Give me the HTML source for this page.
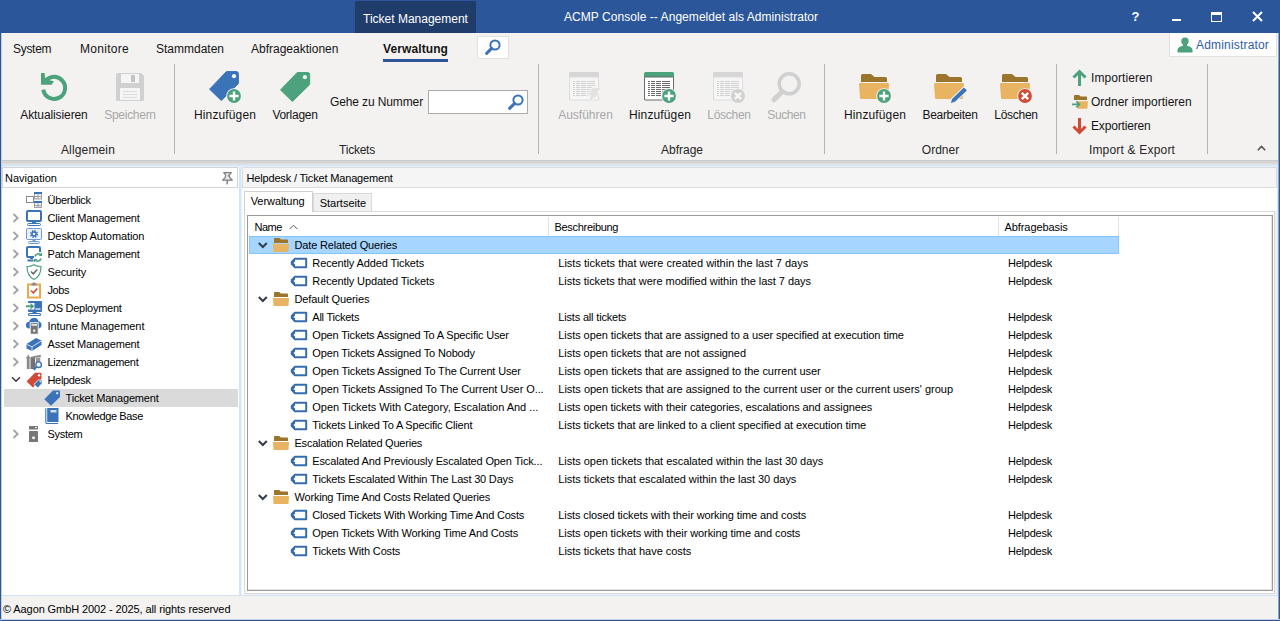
<!DOCTYPE html>
<html lang="de"><head><meta charset="utf-8"><title>ACMP Console</title><style>
*{box-sizing:border-box;margin:0;padding:0}
html,body{width:1280px;height:621px;overflow:hidden;background:#fff}
body{position:relative;font-family:"Liberation Sans",sans-serif;color:#000}
.a{position:absolute}
.t12{position:absolute;font-size:12px;line-height:14px;height:14px;white-space:nowrap;color:#151515}
.t11{position:absolute;font-size:11px;line-height:13px;height:13px;white-space:nowrap;color:#000}
.c{text-align:center}
.dis{color:#a8a8a8}
.sep{position:absolute;top:64px;width:1px;height:90px;background:#b4b4b4}
svg{position:absolute;overflow:visible}
</style></head>
<body>
<div class="a" style="left:0;top:0;width:1280px;height:33px;background:#2b579a"></div>
<div class="a" style="left:355px;top:1px;width:121px;height:32px;background:#1f3c6b"></div>
<div class="t12" style="left:363px;top:12px;color:#fff">Ticket Management</div>
<div class="t12" style="left:564px;top:10px;color:#fff;letter-spacing:.05px">ACMP Console -- Angemeldet als Administrator</div>
<div class="a" style="left:1131px;top:9px;width:9px;font-size:13px;line-height:16px;font-weight:bold;color:#fff;text-align:center">?</div>
<div class="a" style="left:1172px;top:19px;width:9px;height:2px;background:#fff"></div>
<div class="a" style="left:1211px;top:12px;width:11px;height:10px;border:1px solid #fff;border-top-width:3px"></div>
<svg style="left:1252px;top:11px" width="11" height="11" viewBox="0 0 11 11"><path d="M1 1L10 10M10 1L1 10" stroke="#fff" stroke-width="2" fill="none"/></svg>
<div class="a" style="left:0;top:33px;width:1280px;height:127px;background:#f3f2f1"></div>
<div class="a" style="left:0;top:160px;width:1280px;height:5px;background:linear-gradient(#c9c9c9,#e4e4e4)"></div>
<div class="a" style="left:0;top:165px;width:1280px;height:2px;background:linear-gradient(#cfe6fc,#e6f1fc)"></div>
<div class="t12" style="left:13px;top:42px;letter-spacing:-0.3px">System</div>
<div class="t12" style="left:80px;top:42px;letter-spacing:0.3px">Monitore</div>
<div class="t12" style="left:156px;top:42px">Stammdaten</div>
<div class="t12" style="left:251px;top:42px">Abfrageaktionen</div>
<div class="t12" style="left:383px;top:42px;font-weight:bold;letter-spacing:0.1px">Verwaltung</div>
<div class="a" style="left:383px;top:59px;width:65px;height:3px;background:#2b579a"></div>
<div class="a" style="left:477px;top:36px;width:32px;height:23px;background:#fff;border:1px solid #e3e1df"></div>
<svg style="left:485px;top:38.7px" width="16" height="16" viewBox="0 0 16 16"><circle cx="10" cy="6" r="4.6" fill="none" stroke="#3b73b9" stroke-width="2"/><path d="M6.6 9.4L1.6 14.4" stroke="#3b73b9" stroke-width="2.9" stroke-linecap="round"/></svg>
<div class="a" style="left:1169px;top:33px;width:108px;height:24px;background:#fff;border:1px solid #e3e1df;border-top:none"></div>
<svg style="left:1177px;top:37px" width="16" height="16" viewBox="0 0 16 16"><circle cx="8" cy="4.2" r="3.7" fill="#4ca27c"/><rect x="6" y="6" width="4" height="4" fill="#4ca27c"/><path d="M0.5 15.5V13c0-2.2 2.6-3.6 5-4.3h5c2.4 .7 5 2.100 5 4.300v2.500z" fill="#4ca27c"/></svg>
<div class="t12" style="left:1196px;top:38px;color:#2f5ca6;letter-spacing:.18px">Administrator</div>
<div class="sep" style="left:174px"></div>
<div class="sep" style="left:538px"></div>
<div class="sep" style="left:824px"></div>
<div class="sep" style="left:1056px"></div>
<div class="sep" style="left:1207px"></div>
<div class="t12 c" style="left:-6px;width:120px;top:108px;letter-spacing:-0.1px">Aktualisieren</div>
<div class="t12 c dis" style="left:70px;width:120px;top:108px;letter-spacing:-0.28px">Speichern</div>
<div class="t12 c" style="left:28px;width:120px;top:143px;color:#262626;letter-spacing:0.15px">Allgemein</div>
<div class="t12 c" style="left:165px;width:120px;top:108px;letter-spacing:0.13px">Hinzufügen</div>
<div class="t12 c" style="left:235px;width:120px;top:108px;letter-spacing:-0.27px">Vorlagen</div>
<div class="t12 c" style="left:297px;width:120px;top:143px;color:#262626;letter-spacing:-0.25px">Tickets</div>
<div class="t12" style="left:330px;top:95px;letter-spacing:-0.12px">Gehe zu Nummer</div>
<div class="a" style="left:428px;top:90px;width:100px;height:24px;background:#fff;border:1px solid #ababab"></div>
<svg style="left:508px;top:94.3px" width="16" height="16" viewBox="0 0 16 16"><circle cx="10" cy="6" r="4.6" fill="none" stroke="#3b73b9" stroke-width="2"/><path d="M6.6 9.4L1.6 14.4" stroke="#3b73b9" stroke-width="2.9" stroke-linecap="round"/></svg>
<div class="t12 c dis" style="left:525.5px;width:120px;top:108px">Ausführen</div>
<div class="t12 c" style="left:600px;width:120px;top:108px;letter-spacing:0.13px">Hinzufügen</div>
<div class="t12 c dis" style="left:669px;width:120px;top:108px;letter-spacing:-0.3px">Löschen</div>
<div class="t12 c dis" style="left:726.5px;width:120px;top:108px;letter-spacing:-0.4px">Suchen</div>
<div class="t12 c" style="left:622px;width:120px;top:143px;color:#262626">Abfrage</div>
<div class="t12 c" style="left:815px;width:120px;top:108px;letter-spacing:0.13px">Hinzufügen</div>
<div class="t12 c" style="left:890px;width:120px;top:108px;letter-spacing:-0.3px">Bearbeiten</div>
<div class="t12 c" style="left:956px;width:120px;top:108px;letter-spacing:-0.3px">Löschen</div>
<div class="t12 c" style="left:880.5px;width:120px;top:143px;color:#262626">Ordner</div>
<div class="t12" style="left:1091px;top:71px;letter-spacing:0.07px">Importieren</div>
<div class="t12" style="left:1091px;top:95px">Ordner importieren</div>
<div class="t12" style="left:1091px;top:119px;letter-spacing:-0.17px">Exportieren</div>
<div class="t12 c" style="left:1072px;width:120px;top:143px;color:#262626;letter-spacing:0.19px">Import &amp; Export</div>
<svg style="left:1257px;top:145px" width="9" height="6" viewBox="0 0 9 6"><path d="M0.8 5.2L4.5 1.5L8.2 5.2" fill="none" stroke="#555" stroke-width="1.6"/></svg>
<svg style="left:0;top:0" width="1280" height="621" viewBox="0 0 1280 621"><path d="M44.13 83.25A11 11 0 1 1 43.24 89.62" fill="none" stroke="#4ca27c" stroke-width="4"/><path d="M41 73L44.6 73L45.2 79.2L54 81.3L51.6 84.8L41 84.8Z" fill="#4ca27c"/><path d="M117.5 73h23.5l3 3v23.500a1.500 1.500 0 0 1-1.500 1.500h-25a1.500 1.500 0 0 1-1.500-1.500v-25a1.500 1.500 0 0 1 1.500-1.500z" fill="#d0d0d0"/><rect x="121" y="74" width="18" height="9" fill="#f5f5f5"/><rect x="131" y="75" width="4" height="7" fill="#c4c4c4"/><rect x="120" y="88" width="20" height="12" fill="#f5f5f5"/><path d="M123 91.500h14M123 94.500h14M123 97.500h14" stroke="#dcdcdc" stroke-width="1"/><path d="M209.6 89.2L226.4 71.6H236.4a2 2 0 0 1 2 2V83.6L221.3 100.5Z" fill="#3b73b9" stroke="#3b73b9" stroke-width="1" stroke-linejoin="round"/><circle cx="234" cy="76.2" r="2.1" fill="#f3f2f1"/><circle cx="234" cy="96" r="7.8" fill="#f3f2f1"/><circle cx="234" cy="96" r="6.9" fill="#4ca27c"/><path d="M229.4 96H238.6M234 91.4V100.6" stroke="#fff" stroke-width="2.4"/><path d="M280.5 89.9L297.2 72.5H307.7a2 2 0 0 1 2 2V84.6L292.4 101.5Z" fill="#4ca27c" stroke="#4ca27c" stroke-width="1" stroke-linejoin="round"/><circle cx="304.9" cy="77.2" r="2.1" fill="#f3f2f1"/><path d="M569 100V73.500a1.500 1.500 0 0 1 1.500-1.500h27a1.500 1.500 0 0 1 1.500 1.500V100z" fill="#d6d6d6"/><rect x="569.5" y="77" width="29" height="23" rx="1" fill="#f6f6f6" stroke="#dcdcdc" stroke-width="1"/><path d="M573 81.5h2M576 81.5h4M581 81.5h5M587 81.5h8" stroke="#d2d2d2" stroke-width="1"/><path d="M573 83.5h2M576 83.5h4M581 83.5h5M587 83.5h8" stroke="#d2d2d2" stroke-width="1"/><path d="M573 85.5h2M576 85.5h4M581 85.5h5M587 85.5h8" stroke="#d2d2d2" stroke-width="1"/><path d="M573 87.5h2M576 87.5h4M581 87.5h5M587 87.5h8" stroke="#d2d2d2" stroke-width="1"/><path d="M573 89.5h2M576 89.5h4M581 89.5h5M587 89.5h8" stroke="#d2d2d2" stroke-width="1"/><path d="M573 91.5h2M576 91.5h4M581 91.5h5M587 91.5h8" stroke="#d2d2d2" stroke-width="1"/><path d="M573 93.5h2M576 93.5h4M581 93.5h5M587 93.5h8" stroke="#d2d2d2" stroke-width="1"/><path d="M573 95.5h2M576 95.5h4M581 95.5h5M587 95.5h8" stroke="#d2d2d2" stroke-width="1"/><path d="M592.600 88H600.800L596.200 93.300H599.300L588.200 102.800L591.700 95.600H588.600Z" fill="#e1e1e1" stroke="#f3f2f1" stroke-width="2.200" paint-order="stroke" stroke-linejoin="round"/><path d="M644 100V73.500a1.500 1.500 0 0 1 1.500-1.500h27a1.500 1.500 0 0 1 1.500 1.500V100z" fill="#4ca27c"/><rect x="644.5" y="77" width="29" height="23" rx="1" fill="#fff" stroke="#6a6a6a" stroke-width="1"/><path d="M648 81.5h2M651 81.5h4M656 81.5h5M662 81.5h8" stroke="#6a6a6a" stroke-width="1"/><path d="M648 83.5h2M651 83.5h4M656 83.5h5M662 83.5h8" stroke="#6a6a6a" stroke-width="1"/><path d="M648 85.5h2M651 85.5h4M656 85.5h5M662 85.5h8" stroke="#6a6a6a" stroke-width="1"/><path d="M648 87.5h2M651 87.5h4M656 87.5h5M662 87.5h8" stroke="#6a6a6a" stroke-width="1"/><path d="M648 89.5h2M651 89.5h4M656 89.5h5M662 89.5h8" stroke="#6a6a6a" stroke-width="1"/><path d="M648 91.5h2M651 91.5h4M656 91.5h5M662 91.5h8" stroke="#6a6a6a" stroke-width="1"/><path d="M648 93.5h2M651 93.5h4M656 93.5h5M662 93.5h8" stroke="#6a6a6a" stroke-width="1"/><path d="M648 95.5h2M651 95.5h4M656 95.5h5M662 95.5h8" stroke="#6a6a6a" stroke-width="1"/><circle cx="669" cy="96" r="7.8" fill="#f3f2f1"/><circle cx="669" cy="96" r="6.9" fill="#4ca27c"/><path d="M664.4 96H673.6M669 91.4V100.6" stroke="#fff" stroke-width="2.4"/><path d="M713 100V73.500a1.500 1.500 0 0 1 1.500-1.500h27a1.500 1.500 0 0 1 1.500 1.500V100z" fill="#d6d6d6"/><rect x="713.5" y="77" width="29" height="23" rx="1" fill="#f6f6f6" stroke="#dcdcdc" stroke-width="1"/><path d="M717 81.5h2M720 81.5h4M725 81.5h5M731 81.5h8" stroke="#d2d2d2" stroke-width="1"/><path d="M717 83.5h2M720 83.5h4M725 83.5h5M731 83.5h8" stroke="#d2d2d2" stroke-width="1"/><path d="M717 85.5h2M720 85.5h4M725 85.5h5M731 85.5h8" stroke="#d2d2d2" stroke-width="1"/><path d="M717 87.5h2M720 87.5h4M725 87.5h5M731 87.5h8" stroke="#d2d2d2" stroke-width="1"/><path d="M717 89.5h2M720 89.5h4M725 89.5h5M731 89.5h8" stroke="#d2d2d2" stroke-width="1"/><path d="M717 91.5h2M720 91.5h4M725 91.5h5M731 91.5h8" stroke="#d2d2d2" stroke-width="1"/><path d="M717 93.5h2M720 93.5h4M725 93.5h5M731 93.5h8" stroke="#d2d2d2" stroke-width="1"/><path d="M717 95.5h2M720 95.5h4M725 95.5h5M731 95.5h8" stroke="#d2d2d2" stroke-width="1"/><circle cx="738" cy="96" r="7.8" fill="#f3f2f1"/><circle cx="738" cy="96" r="6.9" fill="#d0d0d0"/><path d="M734.8 92.8L741.2 99.2M741.2 92.8L734.8 99.2" stroke="#f6f6f6" stroke-width="2.4"/><circle cx="789.2" cy="83.800" r="10" fill="none" stroke="#d0d0d0" stroke-width="3.6"/><path d="M781.500 92.300L774 99.800" stroke="#d0d0d0" stroke-width="5" stroke-linecap="round"/><path d="M861 82V75.500a1.500 1.500 0 0 1 1.500-1.500h8.500l3.500 3h11a1.500 1.500 0 0 1 1.500 1.500V82z" fill="#9a752b"/><path d="M859 84.200a1.200 1.200 0 0 1 1.200-1.200h27.600a1.200 1.200 0 0 1 1.200 1.200l-1 13.600a1.200 1.200 0 0 1-1.200 1.200h-25.600a1.200 1.200 0 0 1-1.200-1.200z" fill="#e8b462"/><circle cx="884" cy="96" r="7.8" fill="#f3f2f1"/><circle cx="884" cy="96" r="6.9" fill="#4ca27c"/><path d="M879.4 96H888.6M884 91.4V100.6" stroke="#fff" stroke-width="2.4"/><path d="M936 82V75.500a1.500 1.500 0 0 1 1.500-1.500h8.500l3.500 3h11a1.500 1.500 0 0 1 1.500 1.500V82z" fill="#9a752b"/><path d="M934 84.200a1.200 1.200 0 0 1 1.200-1.200h27.600a1.200 1.200 0 0 1 1.200 1.200l-1 13.600a1.200 1.200 0 0 1-1.200 1.200h-25.600a1.200 1.200 0 0 1-1.200-1.200z" fill="#e8b462"/><path d="M950.900 102.900L952.100 98.900L963.400 87.900a.8.800 0 0 1 1.100 0L966.300 89.800a.8.800 0 0 1 0 1.100L954.900 101.800Z" fill="#3b73b9" stroke="#f3f2f1" stroke-width="2" paint-order="stroke"/><path d="M1002 82V75.500a1.500 1.500 0 0 1 1.500-1.500h8.500l3.500 3h11a1.500 1.500 0 0 1 1.500 1.500V82z" fill="#9a752b"/><path d="M1000 84.200a1.200 1.200 0 0 1 1.200-1.200h27.600a1.200 1.200 0 0 1 1.200 1.200l-1 13.600a1.200 1.200 0 0 1-1.200 1.200h-25.600a1.200 1.200 0 0 1-1.200-1.200z" fill="#e8b462"/><circle cx="1025" cy="96" r="7.8" fill="#f3f2f1"/><circle cx="1025" cy="96" r="6.9" fill="#d04a35"/><path d="M1021.8 92.8L1028.2 99.2M1028.2 92.8L1021.8 99.2" stroke="#fff" stroke-width="2.4"/><path d="M1079.500 86V72M1073.500 77.500L1079.500 71.500L1085.500 77.500" fill="none" stroke="#4ca27c" stroke-width="3"/><path d="M1079.500 118V132M1073.500 126.500L1079.500 132.500L1085.500 126.500" fill="none" stroke="#d04a35" stroke-width="3"/><path d="M1074 100v-4.300a.7.700 0 0 1 .7-.7h4.300l1.800 1.500h5.500a.7.700 0 0 1 .7.700V100z" fill="#9a752b"/><path d="M1077.500 101.200h10.500l-.6 7.600h-9.900z" fill="#e8b462"/><path d="M1072 104.300h7M1076.300 101.300L1079.500 104.300L1076.300 107.300" fill="none" stroke="#4ca27c" stroke-width="1.700"/></svg>
<div class="a" style="left:0;top:33px;width:1px;height:588px;background:#2b579a"></div>
<div class="a" style="left:1px;top:33px;width:1px;height:586px;background:#c3cfe2"></div>
<div class="a" style="left:1279px;top:33px;width:1px;height:588px;background:#2b579a"></div>
<div class="a" style="left:1278px;top:33px;width:1px;height:586px;background:#8fa6cb"></div>
<div class="a" style="left:0;top:620px;width:1280px;height:1px;background:#2b579a"></div>
<div class="a" style="left:0;top:619px;width:1280px;height:1px;background:#c4cee0"></div>
<div class="a" style="left:2px;top:595px;width:1276px;height:1px;background:#cfe4f8"></div>
<div class="a" style="left:2px;top:596px;width:1276px;height:23px;background:#f3f2f1"></div>
<div class="t11" style="left:3px;top:603px;letter-spacing:-0.1px">© Aagon GmbH 2002 - 2025, all rights reserved</div>
<div class="a" style="left:239px;top:167px;width:2px;height:428px;background:#cfe6fc"></div>
<div class="a" style="left:241px;top:167px;width:1px;height:428px;background:#e9f3fd"></div>
<div class="a" style="left:1277px;top:167px;width:1px;height:428px;background:#d3e6f9"></div>
<div class="a" style="left:2px;top:167px;width:236px;height:21px;background:#fff;border:1px solid #d5d5d5"></div>
<div class="t11" style="left:5px;top:172px">Navigation</div>
<svg style="left:221.500px;top:171.500px" width="11" height="13" viewBox="0 0 11 13"><path d="M1.700 .7H9.300L7.300 3.200L7.700 5.300L10.300 8.200H.7L3.300 5.300L3.700 3.200Z" fill="#ececec" stroke="#7c7c7c" stroke-width="1.200" stroke-linejoin="round"/><path d="M5.500 8.200L5 12.300" stroke="#7c7c7c" stroke-width="1.400"/><rect x="5.800" y="2.500" width="1.400" height="2.500" fill="#9a9a9a"/></svg>
<svg style="left:26px;top:192px" width="16" height="16" viewBox="0 0 16 16"><rect x=".5" y="4.500" width="7" height="6" fill="#fff" stroke="#8a8a8a"/><rect x="8.500" y=".5" width="7" height="6.500" fill="#f0f0f0" stroke="#a0a0a0"/><rect x="8" y="0" width="8" height="2" fill="#3b73b9"/><rect x="8.500" y="9.500" width="7" height="6" fill="#f0f0f0" stroke="#a0a0a0"/><rect x="8" y="9" width="8" height="2" fill="#3b73b9"/><path d="M12 2v5M9 4.500h6M12 11v5M9 13.500h6" stroke="#a0a0a0" stroke-width="1"/></svg>
<div class="t11" style="left:47.5px;top:194px;letter-spacing:-0.295px">Überblick</div>
<svg style="left:12px;top:213px" width="8" height="10" viewBox="0 0 8 10"><path d="M1.500 1L5.700 5L1.500 9" fill="none" stroke="#a2a2a2" stroke-width="1.800"/></svg>
<svg style="left:26px;top:210px" width="16" height="16" viewBox="0 0 16 16"><rect x="1" y="1" width="14" height="10" rx="1" fill="#fff" stroke="#3b73b9" stroke-width="2"/><rect x="6" y="11" width="4" height="2" fill="#3b73b9"/><rect x="1.500" y="13.500" width="13" height="2" rx="1" fill="#fff" stroke="#3b73b9" stroke-width="1"/></svg>
<div class="t11" style="left:47.5px;top:212px;letter-spacing:-0.194px">Client Management</div>
<svg style="left:12px;top:231px" width="8" height="10" viewBox="0 0 8 10"><path d="M1.500 1L5.700 5L1.500 9" fill="none" stroke="#a2a2a2" stroke-width="1.800"/></svg>
<svg style="left:26px;top:228px" width="16" height="16" viewBox="0 0 16 16"><rect x=".5" y=".5" width="15" height="11" rx="1" fill="#eaf1fa" stroke="#6f9bd1" stroke-width="1"/><circle cx="8" cy="6" r="3.100" fill="none" stroke="#3b73b9" stroke-width="1.800" stroke-dasharray="1.400 1.030"/><circle cx="8" cy="6" r="2" fill="none" stroke="#3b73b9" stroke-width="1.400"/><rect x="6.500" y="12" width="3" height="2" fill="#6f9bd1"/><rect x="2.500" y="13.500" width="11" height="2" rx="1" fill="#eaf1fa" stroke="#6f9bd1" stroke-width="1"/></svg>
<div class="t11" style="left:47.5px;top:230px;letter-spacing:-0.086px">Desktop Automation</div>
<svg style="left:12px;top:249px" width="8" height="10" viewBox="0 0 8 10"><path d="M1.500 1L5.700 5L1.500 9" fill="none" stroke="#a2a2a2" stroke-width="1.800"/></svg>
<svg style="left:26px;top:246px" width="16" height="16" viewBox="0 0 16 16"><path d="M8 11H2a1 1 0 0 1-1-1V2a1 1 0 0 1 1-1h11a1 1 0 0 1 1 1v4" fill="#fff" stroke="#3b73b9" stroke-width="2"/><rect x="4" y="11" width="3" height="2" fill="#3b73b9"/><path d="M1.500 14.500h6" stroke="#3b73b9" stroke-width="2"/><path d="M9 10.500a3.500 3.500 0 0 1 6-1.500M15 12.500a3.500 3.500 0 0 1-6 1.500" fill="none" stroke="#4ca27c" stroke-width="1.600"/><path d="M16 6.500v3.500h-3.500zM8 16.500v-3.500h3.500z" fill="#4ca27c"/></svg>
<div class="t11" style="left:47.5px;top:248px;letter-spacing:-0.206px">Patch Management</div>
<svg style="left:12px;top:267px" width="8" height="10" viewBox="0 0 8 10"><path d="M1.500 1L5.700 5L1.500 9" fill="none" stroke="#a2a2a2" stroke-width="1.800"/></svg>
<svg style="left:26px;top:264px" width="16" height="16" viewBox="0 0 16 16"><path d="M8 .7c2 1.300 4.500 1.800 7 1.800c0 6-1.500 10.500-7 13c-5.500-2.500-7-7-7-13c2.500 0 5-.5 7-1.800z" fill="#fff" stroke="#4ca27c" stroke-width="1.200"/><path d="M5 7.500l2.200 2.300l4-4.300" fill="none" stroke="#666" stroke-width="1.500"/></svg>
<div class="t11" style="left:47.5px;top:266px;letter-spacing:-0.156px">Security</div>
<svg style="left:12px;top:285px" width="8" height="10" viewBox="0 0 8 10"><path d="M1.500 1L5.700 5L1.500 9" fill="none" stroke="#a2a2a2" stroke-width="1.800"/></svg>
<svg style="left:26px;top:282px" width="16" height="16" viewBox="0 0 16 16"><rect x="2" y="2.500" width="12" height="13" fill="#fff" stroke="#e6a94f" stroke-width="2"/><path d="M6 2.500l1-2h2l1 2z" fill="#8a8a8a"/><rect x="5.500" y="1.500" width="5" height="2" fill="#8a8a8a"/><path d="M5 8.500l2.300 2.300l4-4.300" fill="none" stroke="#d04a35" stroke-width="1.600"/></svg>
<div class="t11" style="left:47.5px;top:284px;letter-spacing:-0.387px">Jobs</div>
<svg style="left:12px;top:303px" width="8" height="10" viewBox="0 0 8 10"><path d="M1.500 1L5.700 5L1.500 9" fill="none" stroke="#a2a2a2" stroke-width="1.800"/></svg>
<svg style="left:26px;top:300px" width="16" height="16" viewBox="0 0 16 16"><path d="M3 1h12a1 1 0 0 1 1 1v9a1 1 0 0 1-1 1H3a1 1 0 0 1-1-1V9.500h6.500V3H2V2a1 1 0 0 1 1-1z" fill="#3b73b9"/><path d="M9.500 9h5" stroke="#fff" stroke-width="1.200"/><rect x="6.500" y="12" width="4" height="1.500" fill="#3b73b9"/><rect x="2.500" y="13.500" width="12" height="2" rx="1" fill="#fff" stroke="#3b73b9" stroke-width="1.200"/><path d="M0 5.300h4.500v-2.300l4 3.300l-4 3.300v-2.300H0z" fill="#4ca27c"/></svg>
<div class="t11" style="left:47.5px;top:302px;letter-spacing:-0.281px">OS Deployment</div>
<svg style="left:12px;top:321px" width="8" height="10" viewBox="0 0 8 10"><path d="M1.500 1L5.700 5L1.500 9" fill="none" stroke="#a2a2a2" stroke-width="1.800"/></svg>
<svg style="left:26px;top:318px" width="16" height="16" viewBox="0 0 16 16"><path d="M3.500 10.500a3.400 3.400 0 0 1-.3-6.800a4.800 4.800 0 0 1 9.300-.4a3.700 3.700 0 0 1 .3 7.200z" fill="#3b73b9"/><rect x="4.200" y="4.700" width="8" height="11.500" fill="#757575" stroke="#fff" stroke-width=".9"/><rect x="5.500" y="6" width="5.500" height="1.800" fill="#e4e4e4"/><rect x="7.200" y="11.600" width="2.100" height="2.100" fill="#fff"/></svg>
<div class="t11" style="left:47.5px;top:320px;letter-spacing:-0.056px">Intune Management</div>
<svg style="left:12px;top:339px" width="8" height="10" viewBox="0 0 8 10"><path d="M1.500 1L5.700 5L1.500 9" fill="none" stroke="#a2a2a2" stroke-width="1.800"/></svg>
<svg style="left:26px;top:336px" width="16" height="16" viewBox="0 0 16 16"><path d="M0.500 8L10 2l5.500 2.500v4.500L6 15L.5 12.500z" fill="#3b73b9"/><path d="M.5 8.300L6 10.800L15.500 4.800M6 10.800V15" fill="none" stroke="#dfe9f6" stroke-width=".9"/></svg>
<div class="t11" style="left:47.5px;top:338px;letter-spacing:-0.180px">Asset Management</div>
<svg style="left:12px;top:357px" width="8" height="10" viewBox="0 0 8 10"><path d="M1.500 1L5.700 5L1.500 9" fill="none" stroke="#a2a2a2" stroke-width="1.800"/></svg>
<svg style="left:26px;top:354px" width="16" height="16" viewBox="0 0 16 16"><path d="M.8 3.300L2.200 .3L3.600 3.300V15H.8z" fill="#8a8a8a"/><path d="M0 3.800h1M3.400 3.800h1" stroke="#8a8a8a"/><rect x="4.500" y="3" width="4.500" height="12" fill="#727272"/><path d="M5 2.700L14.800 .8v2.300L5 4.600z" fill="#8a8a8a"/><path d="M9.800 4.300l4.500-.9v4L9.800 10z" fill="#979797"/><circle cx="12.600" cy="10.700" r="2.800" fill="#fff" stroke="#3b73b9" stroke-width="1.400"/><path d="M10.500 12.900L8.300 15.300" stroke="#3b73b9" stroke-width="1.800" stroke-linecap="round"/></svg>
<div class="t11" style="left:47.5px;top:356px;letter-spacing:-0.320px">Lizenzmanagement</div>
<svg style="left:11px;top:376px" width="10" height="7" viewBox="0 0 10 7"><path d="M1 1.200L5 5.200L9 1.200" fill="none" stroke="#404040" stroke-width="1.600"/></svg>
<svg style="left:26px;top:372px" width="16" height="16" viewBox="0 0 16 16"><path d="M.5 9.500L9 .8h5.500a1 1 0 0 1 1 1V7L7 15.500z" fill="#d04a35"/><circle cx="13" cy="3.300" r="1.200" fill="#fff"/><path d="M8 12.300l4.500-4.300h3a.5.500 0 0 1 .5.500v3L11.700 16z" fill="#3b73b9" stroke="#fff" stroke-width=".8"/><circle cx="14.300" cy="9.700" r=".7" fill="#fff"/></svg>
<div class="t11" style="left:47.5px;top:374px;letter-spacing:-0.332px">Helpdesk</div>
<div class="a" style="left:4px;top:389px;width:234px;height:18px;background:#dadada"></div>
<svg style="left:44px;top:390px" width="16" height="16" viewBox="0 0 16 16"><path d="M.3 9.300L9 .5h6a1 1 0 0 1 1 1V7L7 15.800z" fill="#3b73b9"/><rect x="12.200" y="2.200" width="2" height="2" fill="#e6edf6"/></svg>
<div class="t11" style="left:65.5px;top:392px;letter-spacing:-0.183px">Ticket Management</div>
<svg style="left:44px;top:408px" width="16" height="16" viewBox="0 0 16 16"><path d="M3.200 0H14.500V14H3.200z" fill="#3b73b9"/><path d="M1.800 .3V14.200a1.200 1.200 0 0 0 1.200 1.300H14" fill="none" stroke="#3b73b9" stroke-width="1.100"/><rect x="6.500" y="2" width="6" height="2.500" fill="#cfdcee"/></svg>
<div class="t11" style="left:65.5px;top:410px;letter-spacing:-0.362px">Knowledge Base</div>
<svg style="left:12px;top:429px" width="8" height="10" viewBox="0 0 8 10"><path d="M1.500 1L5.700 5L1.500 9" fill="none" stroke="#a2a2a2" stroke-width="1.800"/></svg>
<svg style="left:26px;top:426px" width="16" height="16" viewBox="0 0 16 16"><rect x="3" y="0" width="9" height="3.500" rx=".5" fill="#777"/><rect x="9" y="1" width="2" height="1.200" fill="#e8e8e8"/><rect x="3" y="5" width="9" height="11" rx=".5" fill="#777"/><circle cx="7.500" cy="11.800" r="1.500" fill="#f2f2f2"/></svg>
<div class="t11" style="left:47.5px;top:428px;letter-spacing:-0.315px">System</div>
<div class="a" style="left:242px;top:167px;width:1035px;height:21px;background:#f5f5f5;border:1px solid #dcdcdc"></div>
<div class="t11" style="left:246.500px;top:172px;letter-spacing:-0.17px">Helpdesk / Ticket Management</div>
<div class="a" style="left:244px;top:211px;width:1033px;height:384px;background:#f0f0f0"></div>
<div class="a" style="left:244px;top:211px;width:1031px;height:383px;background:#fff;border:1px solid #dadada"></div>
<div class="a" style="left:313px;top:193px;width:59px;height:19px;background:#f0f0f0;border:1px solid #d9d9d9"></div>
<div class="t11" style="left:319.700px;top:197px">Startseite</div>
<div class="a" style="left:244px;top:191px;width:69px;height:21px;background:#fff;border:1px solid #d0d0d0;border-bottom:none"></div>
<div class="t11" style="left:250.700px;top:195px;letter-spacing:-0.06px">Verwaltung</div>
<div class="a" style="left:247px;top:215px;width:1026px;height:376px;background:#fff;border:1px solid #9a9a9a;box-shadow:inset -1px -1px 0 #e3e3e3"></div>
<div class="t11" style="left:254.500px;top:221px;letter-spacing:-0.5px">Name</div>
<svg style="left:289px;top:224px" width="9" height="6" viewBox="0 0 9 6"><path d="M.7 5L4.500 1.200L8.300 5" fill="none" stroke="#5a5a5a" stroke-width="1"/></svg>
<div class="t11" style="left:554.500px;top:221px;letter-spacing:-0.3px">Beschreibung</div>
<div class="t11" style="left:1004.500px;top:221px;letter-spacing:-0.08px">Abfragebasis</div>
<div class="a" style="left:548px;top:217px;width:1px;height:19px;background:#e2e2e2"></div>
<div class="a" style="left:998px;top:217px;width:1px;height:19px;background:#e2e2e2"></div>
<div class="a" style="left:1118px;top:217px;width:1px;height:19px;background:#e2e2e2"></div>
<div class="a" style="left:249px;top:236px;width:870px;height:18px;background:#a6d5ff;border:1px solid #86c4fd"></div>
<svg style="left:258px;top:242px" width="10" height="7" viewBox="0 0 10 7"><path d="M.8 1L4.800 5L8.800 1" fill="none" stroke="#333d4b" stroke-width="2"/></svg>
<svg style="left:273px;top:238px" width="16" height="14" viewBox="0 0 16 14"><path d="M1 5V.8a.8.800 0 0 1 .8-.8h4.400l1.800 1.500h6.200a.8.800 0 0 1 .8.800V5z" fill="#9a752b"/><path d="M0 6.500a.6.600 0 0 1 .6-.6h14.800a.6.600 0 0 1 .6.600l-.5 7a.6.600 0 0 1-.6.500H1.100a.6.600 0 0 1-.6-.5z" fill="#e8b462"/></svg>
<div class="t11" style="left:294.500px;top:239px;letter-spacing:-0.164px">Date Related Queries</div>
<svg style="left:291px;top:258px" width="16" height="10" viewBox="0 0 16 10"><path d="M4 .8H15.200V9.200H4L.8 6V4z" fill="#fff" stroke="#386cb0" stroke-width="2" stroke-linejoin="round"/><path d="M4 1L1 4V6L4 9z" fill="#386cb0"/><circle cx="3.800" cy="5" r="1.100" fill="#fff"/></svg>
<div class="t11" style="left:312.300px;top:257px;letter-spacing:-0.111px">Recently Added Tickets</div>
<div class="t11" style="left:558.300px;top:257px;letter-spacing:-0.003px">Lists tickets that were created within the last 7 days</div>
<div class="t11" style="left:1008px;top:257px;letter-spacing:-0.24px">Helpdesk</div>
<svg style="left:291px;top:276px" width="16" height="10" viewBox="0 0 16 10"><path d="M4 .8H15.200V9.200H4L.8 6V4z" fill="#fff" stroke="#386cb0" stroke-width="2" stroke-linejoin="round"/><path d="M4 1L1 4V6L4 9z" fill="#386cb0"/><circle cx="3.800" cy="5" r="1.100" fill="#fff"/></svg>
<div class="t11" style="left:312.300px;top:275px;letter-spacing:-0.114px">Recently Updated Tickets</div>
<div class="t11" style="left:558.300px;top:275px;letter-spacing:-0.041px">Lists tickets that were modified within the last 7 days</div>
<div class="t11" style="left:1008px;top:275px;letter-spacing:-0.24px">Helpdesk</div>
<svg style="left:258px;top:296px" width="10" height="7" viewBox="0 0 10 7"><path d="M.8 1L4.800 5L8.800 1" fill="none" stroke="#333d4b" stroke-width="2"/></svg>
<svg style="left:273px;top:292px" width="16" height="14" viewBox="0 0 16 14"><path d="M1 5V.8a.8.800 0 0 1 .8-.8h4.400l1.800 1.500h6.200a.8.800 0 0 1 .8.800V5z" fill="#9a752b"/><path d="M0 6.500a.6.600 0 0 1 .6-.6h14.800a.6.600 0 0 1 .6.600l-.5 7a.6.600 0 0 1-.6.500H1.100a.6.600 0 0 1-.6-.5z" fill="#e8b462"/></svg>
<div class="t11" style="left:294.500px;top:293px;letter-spacing:-0.109px">Default Queries</div>
<svg style="left:291px;top:312px" width="16" height="10" viewBox="0 0 16 10"><path d="M4 .8H15.200V9.200H4L.8 6V4z" fill="#fff" stroke="#386cb0" stroke-width="2" stroke-linejoin="round"/><path d="M4 1L1 4V6L4 9z" fill="#386cb0"/><circle cx="3.800" cy="5" r="1.100" fill="#fff"/></svg>
<div class="t11" style="left:312.300px;top:311px;letter-spacing:-0.238px">All Tickets</div>
<div class="t11" style="left:558.300px;top:311px;letter-spacing:-0.178px">Lists all tickets</div>
<div class="t11" style="left:1008px;top:311px;letter-spacing:-0.24px">Helpdesk</div>
<svg style="left:291px;top:330px" width="16" height="10" viewBox="0 0 16 10"><path d="M4 .8H15.200V9.200H4L.8 6V4z" fill="#fff" stroke="#386cb0" stroke-width="2" stroke-linejoin="round"/><path d="M4 1L1 4V6L4 9z" fill="#386cb0"/><circle cx="3.800" cy="5" r="1.100" fill="#fff"/></svg>
<div class="t11" style="left:312.300px;top:329px;letter-spacing:-0.173px">Open Tickets Assigned To A Specific User</div>
<div class="t11" style="left:558.300px;top:329px;letter-spacing:-0.064px">Lists open tickets that are assigned to a user specified at execution time</div>
<div class="t11" style="left:1008px;top:329px;letter-spacing:-0.24px">Helpdesk</div>
<svg style="left:291px;top:348px" width="16" height="10" viewBox="0 0 16 10"><path d="M4 .8H15.200V9.200H4L.8 6V4z" fill="#fff" stroke="#386cb0" stroke-width="2" stroke-linejoin="round"/><path d="M4 1L1 4V6L4 9z" fill="#386cb0"/><circle cx="3.800" cy="5" r="1.100" fill="#fff"/></svg>
<div class="t11" style="left:312.300px;top:347px;letter-spacing:-0.153px">Open Tickets Assigned To Nobody</div>
<div class="t11" style="left:558.300px;top:347px;letter-spacing:-0.062px">Lists open tickets that are not assigned</div>
<div class="t11" style="left:1008px;top:347px;letter-spacing:-0.24px">Helpdesk</div>
<svg style="left:291px;top:366px" width="16" height="10" viewBox="0 0 16 10"><path d="M4 .8H15.200V9.200H4L.8 6V4z" fill="#fff" stroke="#386cb0" stroke-width="2" stroke-linejoin="round"/><path d="M4 1L1 4V6L4 9z" fill="#386cb0"/><circle cx="3.800" cy="5" r="1.100" fill="#fff"/></svg>
<div class="t11" style="left:312.300px;top:365px;letter-spacing:-0.137px">Open Tickets Assigned To The Current User</div>
<div class="t11" style="left:558.300px;top:365px;letter-spacing:-0.031px">Lists open tickets that are assigned to the current user</div>
<div class="t11" style="left:1008px;top:365px;letter-spacing:-0.24px">Helpdesk</div>
<svg style="left:291px;top:384px" width="16" height="10" viewBox="0 0 16 10"><path d="M4 .8H15.200V9.200H4L.8 6V4z" fill="#fff" stroke="#386cb0" stroke-width="2" stroke-linejoin="round"/><path d="M4 1L1 4V6L4 9z" fill="#386cb0"/><circle cx="3.800" cy="5" r="1.100" fill="#fff"/></svg>
<div class="t11" style="left:312.300px;top:383px;letter-spacing:-0.080px">Open Tickets Assigned To The Current User O...</div>
<div class="t11" style="left:558.300px;top:383px;letter-spacing:-0.014px">Lists open tickets that are assigned to the current user or the current users' group</div>
<div class="t11" style="left:1008px;top:383px;letter-spacing:-0.24px">Helpdesk</div>
<svg style="left:291px;top:402px" width="16" height="10" viewBox="0 0 16 10"><path d="M4 .8H15.200V9.200H4L.8 6V4z" fill="#fff" stroke="#386cb0" stroke-width="2" stroke-linejoin="round"/><path d="M4 1L1 4V6L4 9z" fill="#386cb0"/><circle cx="3.800" cy="5" r="1.100" fill="#fff"/></svg>
<div class="t11" style="left:312.300px;top:401px;letter-spacing:-0.027px">Open Tickets With Category, Escalation And ...</div>
<div class="t11" style="left:558.300px;top:401px;letter-spacing:-0.097px">Lists open tickets with their categories, escalations and assignees</div>
<div class="t11" style="left:1008px;top:401px;letter-spacing:-0.24px">Helpdesk</div>
<svg style="left:291px;top:420px" width="16" height="10" viewBox="0 0 16 10"><path d="M4 .8H15.200V9.200H4L.8 6V4z" fill="#fff" stroke="#386cb0" stroke-width="2" stroke-linejoin="round"/><path d="M4 1L1 4V6L4 9z" fill="#386cb0"/><circle cx="3.800" cy="5" r="1.100" fill="#fff"/></svg>
<div class="t11" style="left:312.300px;top:419px;letter-spacing:-0.180px">Tickets Linked To A Specific Client</div>
<div class="t11" style="left:558.300px;top:419px;letter-spacing:-0.058px">Lists tickets that are linked to a client specified at execution time</div>
<div class="t11" style="left:1008px;top:419px;letter-spacing:-0.24px">Helpdesk</div>
<svg style="left:258px;top:440px" width="10" height="7" viewBox="0 0 10 7"><path d="M.8 1L4.800 5L8.800 1" fill="none" stroke="#333d4b" stroke-width="2"/></svg>
<svg style="left:273px;top:436px" width="16" height="14" viewBox="0 0 16 14"><path d="M1 5V.8a.8.800 0 0 1 .8-.8h4.400l1.800 1.500h6.200a.8.800 0 0 1 .8.800V5z" fill="#9a752b"/><path d="M0 6.500a.6.600 0 0 1 .6-.6h14.800a.6.600 0 0 1 .6.600l-.5 7a.6.600 0 0 1-.6.500H1.100a.6.600 0 0 1-.6-.5z" fill="#e8b462"/></svg>
<div class="t11" style="left:294.500px;top:437px;letter-spacing:-0.219px">Escalation Related Queries</div>
<svg style="left:291px;top:456px" width="16" height="10" viewBox="0 0 16 10"><path d="M4 .8H15.200V9.200H4L.8 6V4z" fill="#fff" stroke="#386cb0" stroke-width="2" stroke-linejoin="round"/><path d="M4 1L1 4V6L4 9z" fill="#386cb0"/><circle cx="3.800" cy="5" r="1.100" fill="#fff"/></svg>
<div class="t11" style="left:312.300px;top:455px;letter-spacing:-0.154px">Escalated And Previously Escalated Open Tick...</div>
<div class="t11" style="left:558.300px;top:455px;letter-spacing:-0.041px">Lists open tickets that escalated within the last 30 days</div>
<div class="t11" style="left:1008px;top:455px;letter-spacing:-0.24px">Helpdesk</div>
<svg style="left:291px;top:474px" width="16" height="10" viewBox="0 0 16 10"><path d="M4 .8H15.200V9.200H4L.8 6V4z" fill="#fff" stroke="#386cb0" stroke-width="2" stroke-linejoin="round"/><path d="M4 1L1 4V6L4 9z" fill="#386cb0"/><circle cx="3.800" cy="5" r="1.100" fill="#fff"/></svg>
<div class="t11" style="left:312.300px;top:473px;letter-spacing:-0.185px">Tickets Escalated Within The Last 30 Days</div>
<div class="t11" style="left:558.300px;top:473px;letter-spacing:-0.032px">Lists tickets that escalated within the last 30 days</div>
<div class="t11" style="left:1008px;top:473px;letter-spacing:-0.24px">Helpdesk</div>
<svg style="left:258px;top:494px" width="10" height="7" viewBox="0 0 10 7"><path d="M.8 1L4.800 5L8.800 1" fill="none" stroke="#333d4b" stroke-width="2"/></svg>
<svg style="left:273px;top:490px" width="16" height="14" viewBox="0 0 16 14"><path d="M1 5V.8a.8.800 0 0 1 .8-.8h4.400l1.800 1.500h6.200a.8.800 0 0 1 .8.800V5z" fill="#9a752b"/><path d="M0 6.500a.6.600 0 0 1 .6-.6h14.800a.6.600 0 0 1 .6.600l-.5 7a.6.600 0 0 1-.6.500H1.100a.6.600 0 0 1-.6-.5z" fill="#e8b462"/></svg>
<div class="t11" style="left:294.500px;top:491px;letter-spacing:-0.192px">Working Time And Costs Related Queries</div>
<svg style="left:291px;top:510px" width="16" height="10" viewBox="0 0 16 10"><path d="M4 .8H15.200V9.200H4L.8 6V4z" fill="#fff" stroke="#386cb0" stroke-width="2" stroke-linejoin="round"/><path d="M4 1L1 4V6L4 9z" fill="#386cb0"/><circle cx="3.800" cy="5" r="1.100" fill="#fff"/></svg>
<div class="t11" style="left:312.300px;top:509px;letter-spacing:-0.192px">Closed Tickets With Working Time And Costs</div>
<div class="t11" style="left:558.300px;top:509px;letter-spacing:-0.108px">Lists closed tickets with their working time and costs</div>
<div class="t11" style="left:1008px;top:509px;letter-spacing:-0.24px">Helpdesk</div>
<svg style="left:291px;top:528px" width="16" height="10" viewBox="0 0 16 10"><path d="M4 .8H15.200V9.200H4L.8 6V4z" fill="#fff" stroke="#386cb0" stroke-width="2" stroke-linejoin="round"/><path d="M4 1L1 4V6L4 9z" fill="#386cb0"/><circle cx="3.800" cy="5" r="1.100" fill="#fff"/></svg>
<div class="t11" style="left:312.300px;top:527px;letter-spacing:-0.171px">Open Tickets With Working Time And Costs</div>
<div class="t11" style="left:558.300px;top:527px;letter-spacing:-0.086px">Lists open tickets with their working time and costs</div>
<div class="t11" style="left:1008px;top:527px;letter-spacing:-0.24px">Helpdesk</div>
<svg style="left:291px;top:546px" width="16" height="10" viewBox="0 0 16 10"><path d="M4 .8H15.200V9.200H4L.8 6V4z" fill="#fff" stroke="#386cb0" stroke-width="2" stroke-linejoin="round"/><path d="M4 1L1 4V6L4 9z" fill="#386cb0"/><circle cx="3.800" cy="5" r="1.100" fill="#fff"/></svg>
<div class="t11" style="left:312.300px;top:545px;letter-spacing:-0.154px">Tickets With Costs</div>
<div class="t11" style="left:558.300px;top:545px;letter-spacing:-0.031px">Lists tickets that have costs</div>
<div class="t11" style="left:1008px;top:545px;letter-spacing:-0.24px">Helpdesk</div>
</body></html>
